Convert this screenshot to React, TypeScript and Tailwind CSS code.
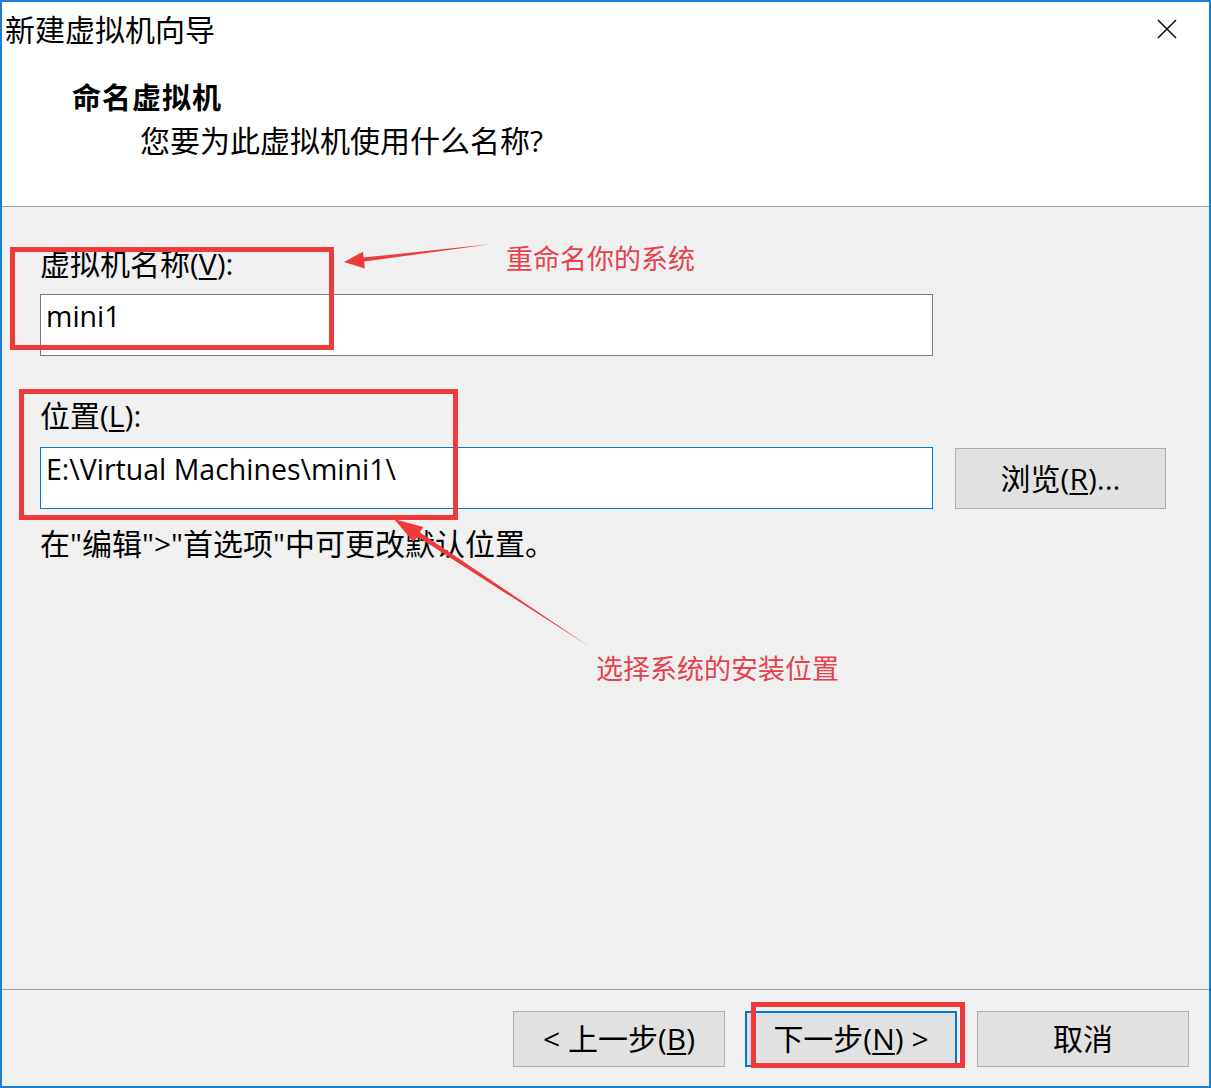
import React from "react";

const RED = "#ee3a3a";

function Key({ children }: { children: React.ReactNode }) {
  return <span className="underline underline-offset-[3px] decoration-[1.5px]">{children}</span>;
}

function Button({ children, primary }: { children: React.ReactNode; primary?: boolean }) {
  return (
    <div
      className={
        "w-[212px] h-[56px] flex items-center justify-center bg-[#e1e1e1] text-[30px] leading-[32px] text-black " +
        (primary ? "border-2 border-[#0078d7]" : "border border-[#adadad]")
      }
    >
      {children}
    </div>
  );
}

export default function App() {
  return (
    <div className="relative w-[1211px] h-[1088px] overflow-hidden border-2 border-[#1a7fd4] bg-white flex flex-col font-['Open_Sans','Noto_Sans_CJK_SC',sans-serif] text-black">
      {/* header */}
      <div className="h-[205px] shrink-0 border-b border-[#a0a0a0] bg-white">
        <div className="flex items-start justify-between pl-[3px] pr-[32px] pt-[10px]">
          <div className="text-[30px] leading-[32px] font-['Noto_Sans_CJK_SC',sans-serif]">新建虚拟机向导</div>
          <svg width="20" height="20" viewBox="0 0 20 20" className="mt-[7px]">
            <path d="M1 1 L19 19 M19 1 L1 19" stroke="#111" strokeWidth="1.6" fill="none" />
          </svg>
        </div>
        <div className="pl-[70px] mt-[36px] text-[29px] leading-[32px] font-bold font-['Noto_Sans_CJK_SC',sans-serif] tracking-[1px]">
          命名虚拟机
        </div>
        <div className="pl-[138px] mt-[13px] text-[30px] leading-[32px]">
          您要为此虚拟机使用什么名称?
        </div>
      </div>

      {/* body */}
      <div className="flex-1 bg-[#f0f0f0] pl-[38px] pt-[41px]">
        <div className="text-[30px] leading-[32px]">
          虚拟机名称(<Key>V</Key>):
        </div>
        <div className="mt-[14px] w-[893px] h-[62px] bg-white border border-[#7a7a7a] pl-[5px] pt-[1px] text-[28.5px] leading-[40px]">
          mini1
        </div>

        <div className="mt-[44px] text-[30px] leading-[32px]">
          位置(<Key>L</Key>):
        </div>
        <div className="mt-[15px] flex items-start gap-[22px]">
          <div className="w-[893px] h-[62px] bg-white border border-[#0078d7] pl-[5px] pt-[1px] text-[28.5px] leading-[40px]">
            E:\Virtual Machines\mini1\
          </div>
          <div className="mt-[1px] w-[211px] h-[61px] flex items-center justify-center bg-[#e1e1e1] border border-[#adadad] text-[30px] leading-[32px]">
            浏览(<Key>R</Key>)...
          </div>
        </div>
        <div className="mt-[19px] text-[30px] leading-[32px]">
          在"编辑"&gt;"首选项"中可更改默认位置。
        </div>
      </div>

      {/* footer */}
      <div className="h-[97px] shrink-0 border-t border-[#a0a0a0] bg-[#f0f0f0] flex justify-end items-start gap-[20px] pt-[21px] pr-[20px]">
        <Button>
          &lt; 上一步(<Key>B</Key>)
        </Button>
        <Button primary>
          下一步(<Key>N</Key>) &gt;
        </Button>
        <Button>取消</Button>
      </div>

      {/* annotations */}
      <div className="absolute left-[8px] top-[245px] w-[324px] h-[103px] border-[5px] border-[#ee3a3a]" />
      <div className="absolute left-[17px] top-[387px] w-[439px] h-[131px] border-[5px] border-[#ee3a3a]" />
      <div className="absolute left-[749px] top-[1000px] w-[214px] h-[66px] border-[5px] border-[#ee3a3a]" />

      <svg className="absolute left-[-2px] top-[-2px] pointer-events-none" width="1211" height="1088" viewBox="0 0 1211 1088">
        <polygon
          points="344,262 362.9,251.7 363.7,257.6 492,244 364.1,261.6 364.9,268.5"
          fill={RED}
        />
        <polygon
          points="394,519 423.3,526.9 419.8,532.3 590,647 417.0,536.5 413.5,541.9"
          fill={RED}
        />
      </svg>

      <div className="absolute left-[504px] top-[241px] text-[27px] leading-[30px] text-[#e4434d] font-['Noto_Sans_CJK_SC',sans-serif]">
        重命名你的系统
      </div>
      <div className="absolute left-[594px] top-[651px] text-[27px] leading-[30px] text-[#e4434d] font-['Noto_Sans_CJK_SC',sans-serif]">
        选择系统的安装位置
      </div>
    </div>
  );
}
